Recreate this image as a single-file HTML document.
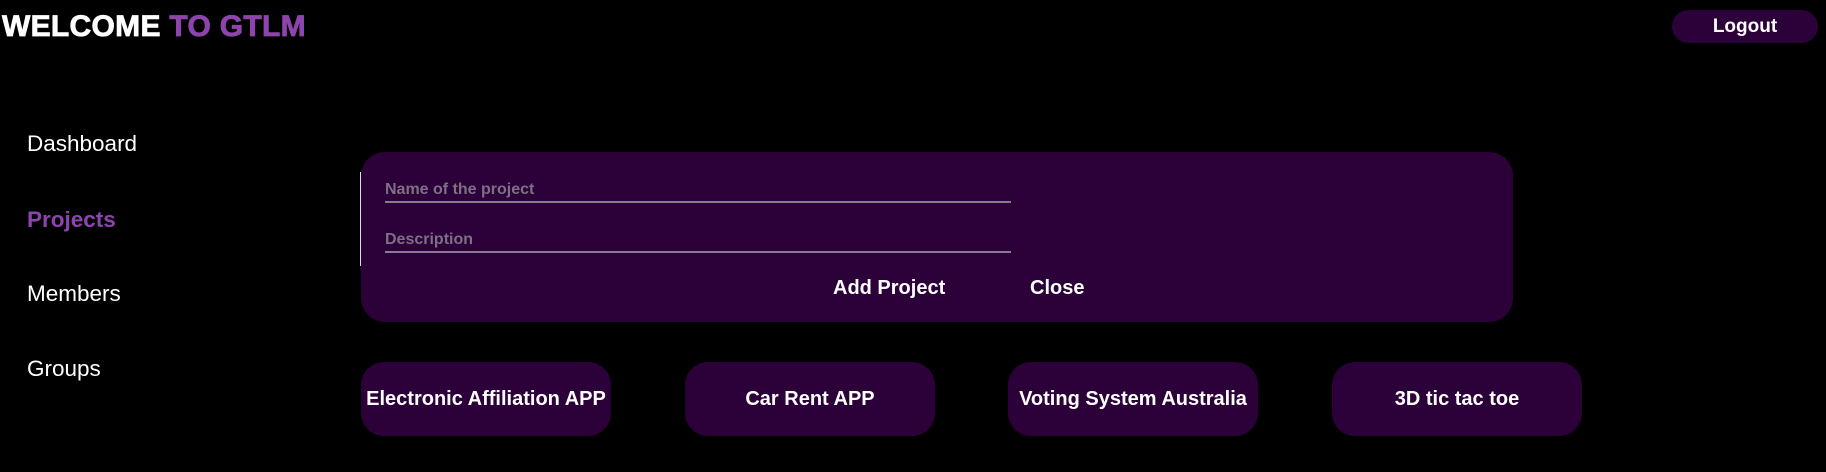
<!DOCTYPE html>
<html><head><style>
body{margin:0;width:1826px;height:472px;background:#000;font-family:"Liberation Sans",Arial,sans-serif;position:relative;overflow:hidden;color:#fff}
.a{position:absolute}
.title{left:2px;top:10px;font-size:30px;font-weight:bold;letter-spacing:0.3px;-webkit-text-stroke:0.8px currentColor}
.p{color:#8e44ad}
.logout{left:1672px;top:10px;width:146px;height:33px;border-radius:17px;background:#2c0038;font-weight:bold;font-size:19px;text-align:center;line-height:33px}
.nav{left:27px;font-size:22.5px}
.panel{left:361px;top:152px;width:1152px;height:170px;border-radius:24px;background:#2c0038}
.in{left:385px;width:626px;border-bottom:2px solid #8a7a8f;color:#7f6f85;font-weight:bold;font-size:16px;padding-bottom:2px}
.btn{font-weight:bold;font-size:20px;top:277px}
.card{top:362px;width:250px;height:74px;border-radius:23px;background:#2c0038;font-weight:bold;font-size:20px;display:flex;align-items:center;justify-content:center;white-space:nowrap}
</style></head><body>
<div class="a title">WELCOME <span class="p">TO GTLM</span></div>
<div class="a logout">Logout</div>
<div class="a nav" style="top:131px">Dashboard</div>
<div class="a nav p" style="top:207px;font-weight:bold">Projects</div>
<div class="a nav" style="top:281px">Members</div>
<div class="a nav" style="top:356px">Groups</div>
<div class="a panel"></div>
<div class="a" style="left:360px;top:172px;width:1px;height:94px;background:#ddd"></div>
<div class="a in" style="top:181px">Name of the project</div>
<div class="a in" style="top:231px">Description</div>
<div class="a btn" style="left:833px">Add Project</div>
<div class="a btn" style="left:1030px">Close</div>
<div class="a card" style="left:361px">Electronic Affiliation APP</div>
<div class="a card" style="left:685px">Car Rent APP</div>
<div class="a card" style="left:1008px">Voting System Australia</div>
<div class="a card" style="left:1332px">3D tic tac toe</div>
</body></html>
